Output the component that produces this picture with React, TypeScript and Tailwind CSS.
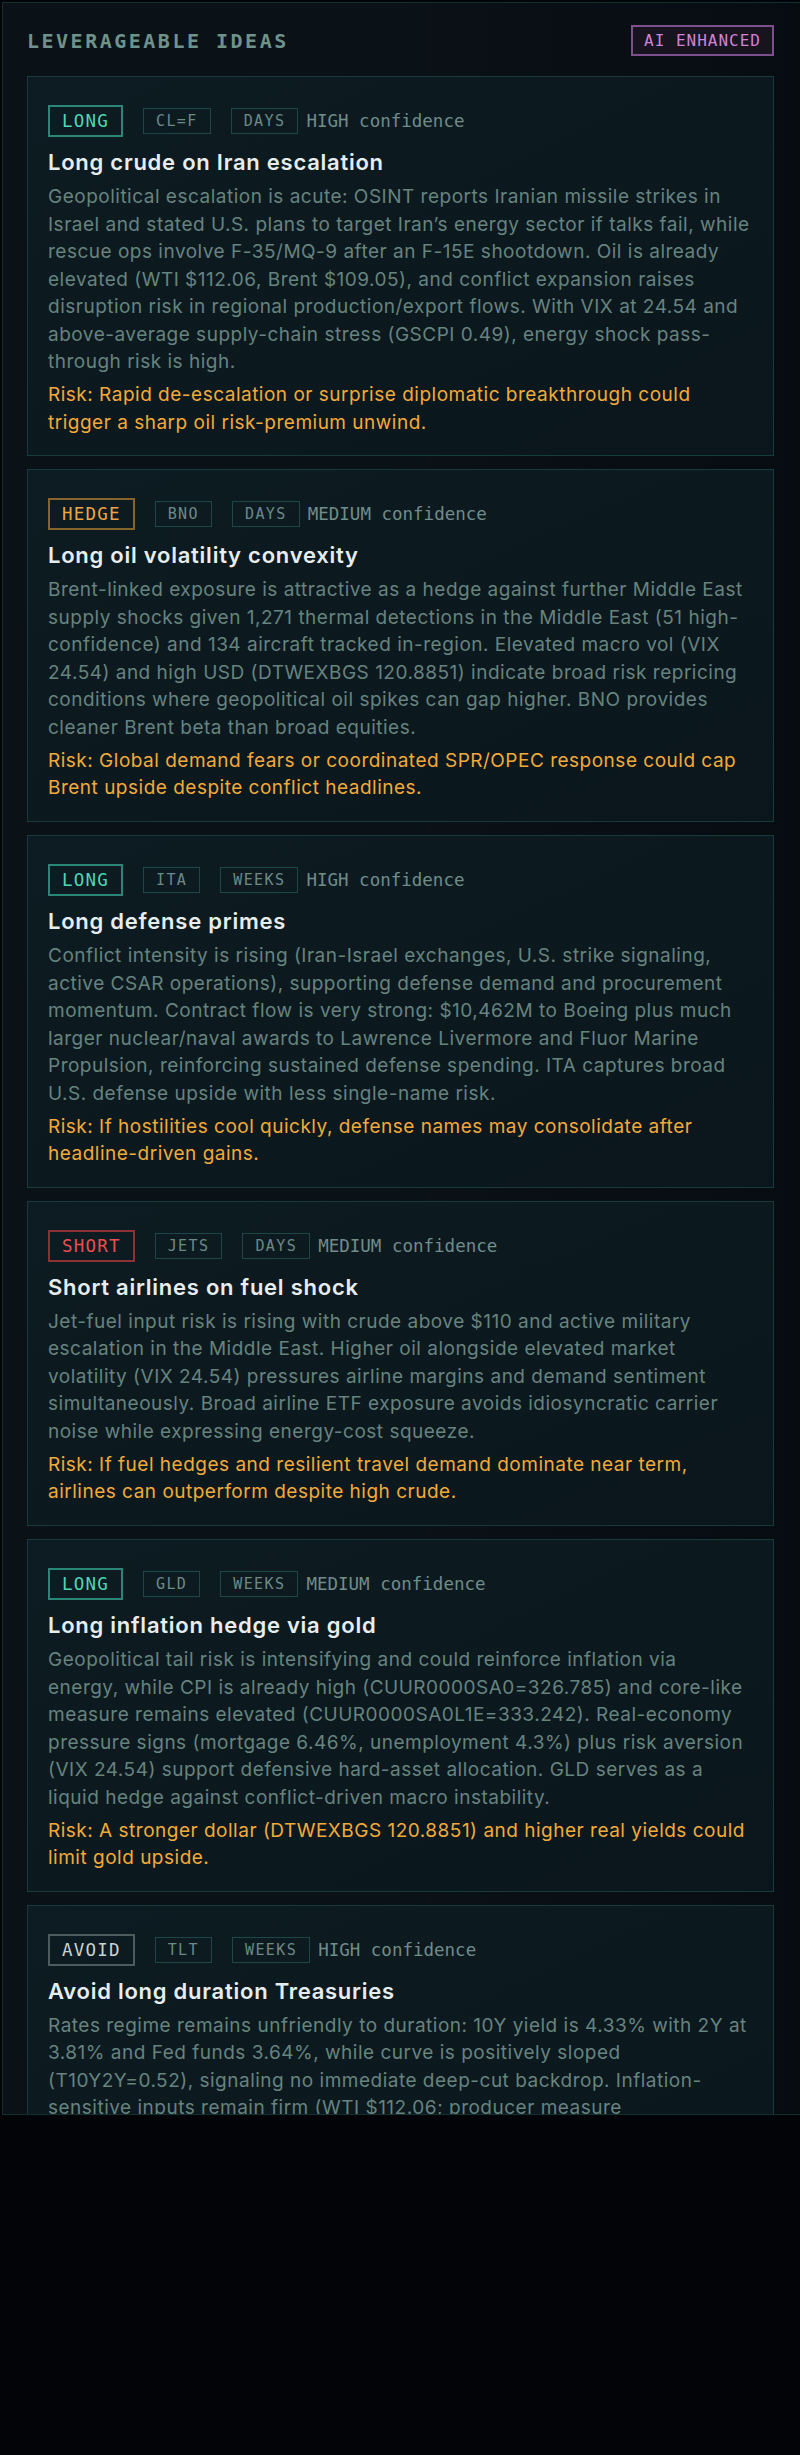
const IDEAS = [
  {
    side: "LONG",
    ticker: "CL=F",
    horizon: "DAYS",
    confidence: "HIGH",
    title: "Long crude on Iran escalation",
    body: "Geopolitical escalation is acute: OSINT reports Iranian missile strikes in Israel and stated U.S. plans to target Iran’s energy sector if talks fail, while rescue ops involve F-35/MQ-9 after an F-15E shootdown. Oil is already elevated (WTI $112.06, Brent $109.05), and conflict expansion raises disruption risk in regional production/export flows. With VIX at 24.54 and above-average supply-chain stress (GSCPI 0.49), energy shock pass-through risk is high.",
    risk: "Risk: Rapid de-escalation or surprise diplomatic breakthrough could trigger a sharp oil risk-premium unwind.",
  },
  {
    side: "HEDGE",
    ticker: "BNO",
    horizon: "DAYS",
    confidence: "MEDIUM",
    title: "Long oil volatility convexity",
    body: "Brent-linked exposure is attractive as a hedge against further Middle East supply shocks given 1,271 thermal detections in the Middle East (51 high-confidence) and 134 aircraft tracked in-region. Elevated macro vol (VIX 24.54) and high USD (DTWEXBGS 120.8851) indicate broad risk repricing conditions where geopolitical oil spikes can gap higher. BNO provides cleaner Brent beta than broad equities.",
    risk: "Risk: Global demand fears or coordinated SPR/OPEC response could cap Brent upside despite conflict headlines.",
  },
  {
    side: "LONG",
    ticker: "ITA",
    horizon: "WEEKS",
    confidence: "HIGH",
    title: "Long defense primes",
    body: "Conflict intensity is rising (Iran-Israel exchanges, U.S. strike signaling, active CSAR operations), supporting defense demand and procurement momentum. Contract flow is very strong: $10,462M to Boeing plus much larger nuclear/naval awards to Lawrence Livermore and Fluor Marine Propulsion, reinforcing sustained defense spending. ITA captures broad U.S. defense upside with less single-name risk.",
    risk: "Risk: If hostilities cool quickly, defense names may consolidate after headline-driven gains.",
  },
  {
    side: "SHORT",
    ticker: "JETS",
    horizon: "DAYS",
    confidence: "MEDIUM",
    title: "Short airlines on fuel shock",
    body: "Jet-fuel input risk is rising with crude above $110 and active military escalation in the Middle East. Higher oil alongside elevated market volatility (VIX 24.54) pressures airline margins and demand sentiment simultaneously. Broad airline ETF exposure avoids idiosyncratic carrier noise while expressing energy-cost squeeze.",
    risk: "Risk: If fuel hedges and resilient travel demand dominate near term, airlines can outperform despite high crude.",
  },
  {
    side: "LONG",
    ticker: "GLD",
    horizon: "WEEKS",
    confidence: "MEDIUM",
    title: "Long inflation hedge via gold",
    body: "Geopolitical tail risk is intensifying and could reinforce inflation via energy, while CPI is already high (CUUR0000SA0=326.785) and core-like measure remains elevated (CUUR0000SA0L1E=333.242). Real-economy pressure signs (mortgage 6.46%, unemployment 4.3%) plus risk aversion (VIX 24.54) support defensive hard-asset allocation. GLD serves as a liquid hedge against conflict-driven macro instability.",
    risk: "Risk: A stronger dollar (DTWEXBGS 120.8851) and higher real yields could limit gold upside.",
  },
  {
    side: "AVOID",
    ticker: "TLT",
    horizon: "WEEKS",
    confidence: "HIGH",
    title: "Avoid long duration Treasuries",
    body: "Rates regime remains unfriendly to duration: 10Y yield is 4.33% with 2Y at 3.81% and Fed funds 3.64%, while curve is positively sloped (T10Y2Y=0.52), signaling no immediate deep-cut backdrop. Inflation-sensitive inputs remain firm (WTI $112.06; producer measure WPUFD49104=152.168), which keeps term-premium pressure alive. TLT carries convexity risk if inflation expectations reprice higher.",
    risk: "Risk: A sudden growth scare or flight-to-quality bid could rally long bonds sharply.",
  },
];

const SIDE_STYLES: Record<string, string> = {
  LONG: "border-[#2a8676] text-[#4fd6b4]",
  HEDGE: "border-[#86642c] text-[#eea443]",
  SHORT: "border-[#8a3234] text-[#ec4d50]",
  AVOID: "border-[#4c5b5d] text-[#c9d2d2]",
};

const mono = "font-['DejaVu_Sans_Mono',monospace]";
const sans = "font-['Inter',sans-serif]";

export default function App() {
  return (
    <div className="min-h-[2455px] bg-[#030407]">
      <div className="pt-[2px] pl-[2px]">
        <div className="h-[2113px] overflow-hidden border border-r-0 border-[#12302f] bg-gradient-to-r from-[#0a1117] via-[#0a1117] to-[#070c11] pl-6 pr-[26px] pt-[22px]">
          {/* Header */}
          <div className="flex items-center justify-between">
            <h2 className={`${mono} text-[20px] font-bold tracking-[2.5px] text-[#6f928a]`}>
              LEVERAGEABLE IDEAS
            </h2>
            <span
              className={`${mono} border-2 border-[#7d4f8c] bg-[#17131f] px-[11px] py-1 text-[16px] leading-[19px] tracking-[1px] text-[#cd84d6]`}
            >
              AI ENHANCED
            </span>
          </div>

          <div className="mt-5 flex flex-col gap-[13.3px]">
            {IDEAS.map((idea) => (
              <IdeaCard key={idea.title} {...idea} />
            ))}
          </div>
        </div>
      </div>
    </div>
  );
}

function IdeaCard({
  side,
  ticker,
  horizon,
  confidence,
  title,
  body,
  risk,
}: (typeof IDEAS)[number]) {
  return (
    <div className="border border-[#173b3c] bg-gradient-to-br from-[#0d1c22] to-[#0a161c] px-5 pt-7 pb-[19px]">
      <div className="flex items-center gap-2">
        <span className={`${mono} border-2 px-3 py-1 text-[17.5px] leading-5 tracking-[1.2px] ${SIDE_STYLES[side]}`}>
          {side}
        </span>
        <Tag>{ticker}</Tag>
        <Tag>{horizon}</Tag>
        <span className={`${mono} text-[17.5px] leading-5 text-[#718c89]`}>{confidence} confidence</span>
      </div>
      <h3 className={`${sans} mt-[11px] text-[22px] font-semibold leading-7 tracking-[0.75px] text-[#e7eded]`}>
        {title}
      </h3>
      <p className={`${sans} mt-[7px] text-[19px] leading-[27.5px] tracking-[0.5px] text-[#67837e]`}>{body}</p>
      <p className={`${sans} mt-[5.5px] text-[19px] leading-[27.5px] tracking-[0.5px] text-[#f2aa3a]`}>{risk}</p>
    </div>
  );
}

function Tag({ children }: { children: React.ReactNode }) {
  return (
    <span
      className={`${mono} ml-3 border-[1.5px] border-[#1d4746] px-3 py-[3px] text-[15px] leading-[18px] tracking-[1.4px] text-[#6d8986]`}
    >
      {children}
    </span>
  );
}
